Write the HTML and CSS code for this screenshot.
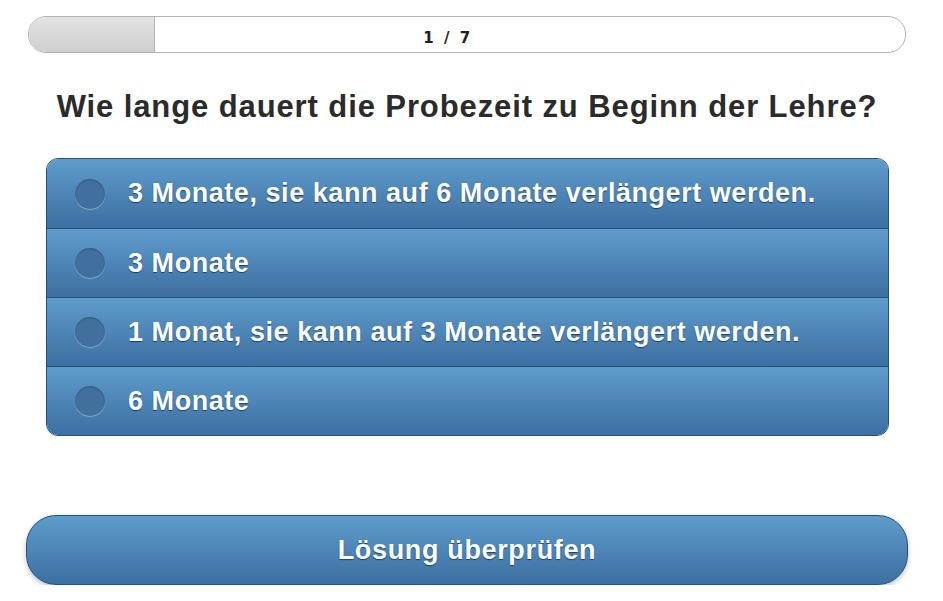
FILE: index.html
```html
<!DOCTYPE html>
<html lang="de">

<head>
    <meta charset="UTF-8">
    <title>Quiz</title>
    <link rel="stylesheet" href="styles.css">
</head>

<body>
    <div class="quiz">
        <div class="progress">
            <div class="progress-fill" style="width: 14.3%"></div>
            <span class="progress-label">1 / 7</span>
        </div>

        <h1 class="question">Wie lange dauert die Probezeit zu Beginn der Lehre?</h1>

        <ul class="answers">
            <li class="answer"><span class="radio"></span>3 Monate, sie kann auf 6 Monate verlängert werden.</li>
            <li class="answer"><span class="radio"></span>3 Monate</li>
            <li class="answer"><span class="radio"></span>1 Monat, sie kann auf 3 Monate verlängert werden.</li>
            <li class="answer"><span class="radio"></span>6 Monate</li>
        </ul>

        <button class="check-btn">Lösung überprüfen</button>
    </div>
</body>

</html>
```

FILE: styles.css
```css
body {
    margin: 0;
    padding: 0;
    background-color: #fff;
    font-family: "Liberation Sans", Arial, sans-serif;
    color: #333;
}

.quiz {
    width: 882px;
    padding: 16px 0 0 26px;
}

.progress {
    position: relative;
    margin-left: 2px;
    width: 876px;
    height: 35px;
    border: 1px solid #b4b4b4;
    border-radius: 18px;
    overflow: hidden;
    background-color: #fff;
}

.progress-fill {
    height: 100%;
    background: linear-gradient(#e2e2e2, #cfcfcf);
    border-right: 1px solid #b4b4b4;
}

.progress-label {
    position: absolute;
    top: 4px;
    left: 0;
    right: 38px;
    line-height: 35px;
    text-align: center;
    font-family: "DejaVu Sans", Verdana, sans-serif;
    font-size: 15px;
    font-weight: bold;
    letter-spacing: 2.5px;
    color: #222;
}

.question {
    margin: 36px 0 0;
    text-align: center;
    font-size: 31px;
    font-weight: bold;
    letter-spacing: 0.9px;
    color: #2b2b2b;
}

.answers {
    list-style: none;
    margin: 33px 0 0 20px;
    padding: 0;
    width: 841px;
    border: 1px solid #24507c;
    border-radius: 12px;
    overflow: hidden;
}

.answer {
    display: flex;
    align-items: center;
    height: 68px;
    padding-left: 28px;
    background: linear-gradient(#5e9ccb, #3d6fa1);
    border-top: 1px solid #24507c;
    color: #fff;
    font-size: 27px;
    font-weight: bold;
    letter-spacing: 0.55px;
    text-shadow: 0 1px 1px #1f3f63;
}

.answer:first-child {
    height: 69px;
    border-top: none;
}

.radio {
    flex-shrink: 0;
    width: 30px;
    height: 30px;
    margin-right: 23px;
    border-radius: 50%;
    background-color: #41709e;
    box-shadow: inset 0 1px 2px rgba(0, 0, 0, 0.2), 0 1px 1px rgba(255, 255, 255, 0.35);
}

.check-btn {
    display: block;
    width: 882px;
    height: 70px;
    margin-top: 79px;
    border: 1px solid #24507c;
    border-radius: 30px;
    background: linear-gradient(#5e9ccb, #3d6fa1);
    box-shadow: 0 2px 5px rgba(0, 0, 0, 0.25);
    color: #fff;
    font-family: "Liberation Sans", Arial, sans-serif;
    font-size: 27px;
    font-weight: bold;
    letter-spacing: 0.65px;
    text-shadow: 0 1px 1px #1f3f63;
    cursor: pointer;
}
```
